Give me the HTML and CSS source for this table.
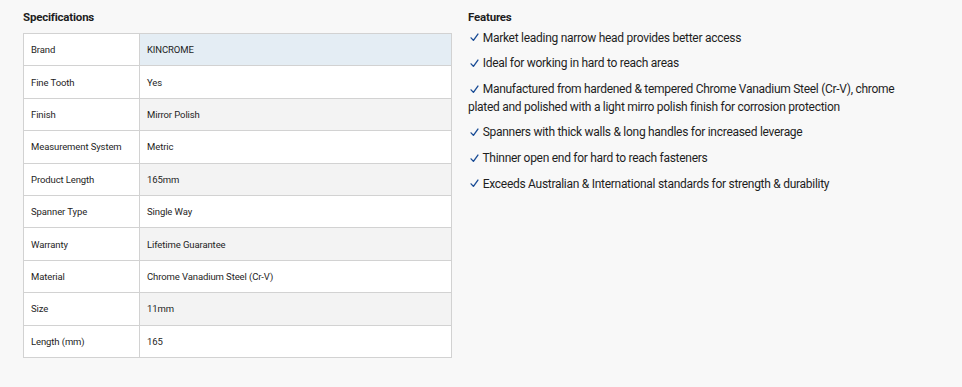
FILE: index.html
```html
<!DOCTYPE html>
<html>
<head>
<meta charset="utf-8">
<link rel="stylesheet" href="styles.css">
</head>
<body>
<div class="page">
  <section class="specs">
    <h2 class="title">Specifications</h2>
    <table class="spec-table">
      <tr class="hl"><td class="k">Brand</td><td class="v">KINCROME</td></tr>
      <tr><td class="k">Fine Tooth</td><td class="v">Yes</td></tr>
      <tr class="alt"><td class="k">Finish</td><td class="v">Mirror Polish</td></tr>
      <tr><td class="k">Measurement System</td><td class="v">Metric</td></tr>
      <tr class="alt"><td class="k">Product Length</td><td class="v">165mm</td></tr>
      <tr><td class="k">Spanner Type</td><td class="v">Single Way</td></tr>
      <tr class="alt"><td class="k">Warranty</td><td class="v">Lifetime Guarantee</td></tr>
      <tr><td class="k">Material</td><td class="v">Chrome Vanadium Steel (Cr-V)</td></tr>
      <tr class="alt"><td class="k">Size</td><td class="v">11mm</td></tr>
      <tr><td class="k">Length (mm)</td><td class="v">165</td></tr>
    </table>
  </section>
  <section class="features">
    <h2 class="ftitle">Features</h2>
    <ul class="flist">
      <li><svg class="chk" viewBox="0 0 10 10" width="9" height="9"><path d="M1.2 5.4 L3.8 8.2 L8.8 1.2" fill="none" stroke="#1b4d96" stroke-width="1.5" stroke-linecap="round" stroke-linejoin="round"/></svg> Market leading narrow head provides better access</li>
      <li><svg class="chk" viewBox="0 0 10 10" width="9" height="9"><path d="M1.2 5.4 L3.8 8.2 L8.8 1.2" fill="none" stroke="#1b4d96" stroke-width="1.5" stroke-linecap="round" stroke-linejoin="round"/></svg> Ideal for working in hard to reach areas</li>
      <li><svg class="chk" viewBox="0 0 10 10" width="9" height="9"><path d="M1.2 5.4 L3.8 8.2 L8.8 1.2" fill="none" stroke="#1b4d96" stroke-width="1.5" stroke-linecap="round" stroke-linejoin="round"/></svg> Manufactured from hardened &amp; tempered Chrome Vanadium Steel (Cr-V), chrome plated and polished with a light mirro polish finish for corrosion protection</li>
      <li><svg class="chk" viewBox="0 0 10 10" width="9" height="9"><path d="M1.2 5.4 L3.8 8.2 L8.8 1.2" fill="none" stroke="#1b4d96" stroke-width="1.5" stroke-linecap="round" stroke-linejoin="round"/></svg> Spanners with thick walls &amp; long handles for increased leverage</li>
      <li><svg class="chk" viewBox="0 0 10 10" width="9" height="9"><path d="M1.2 5.4 L3.8 8.2 L8.8 1.2" fill="none" stroke="#1b4d96" stroke-width="1.5" stroke-linecap="round" stroke-linejoin="round"/></svg> Thinner open end for hard to reach fasteners</li>
      <li><svg class="chk" viewBox="0 0 10 10" width="9" height="9"><path d="M1.2 5.4 L3.8 8.2 L8.8 1.2" fill="none" stroke="#1b4d96" stroke-width="1.5" stroke-linecap="round" stroke-linejoin="round"/></svg> Exceeds Australian &amp; International standards for strength &amp; durability</li>
    </ul>
  </section>
</div>
</body>
</html>
```
FILE: styles.css
```css
html, body {
  margin: 0;
  padding: 0;
  background: #f8f8f8;
}
body {
  font-family: Roboto, "Liberation Sans", sans-serif;
  color: #1e1e1e;
  width: 962px;
  height: 387px;
  overflow: hidden;
}
.page {
  display: flex;
  padding: 10px 0 0 23px;
}
.specs {
  width: 429px;
}
.title {
  margin: 0 0 8px 0;
  font-size: 11.5px;
  font-weight: 700;
  line-height: 15px;
  letter-spacing: -0.2px;
}
.spec-table {
  width: 429px;
  border-collapse: collapse;
  background: #fff;
  font-size: 9.5px;
  letter-spacing: -0.1px;
}
.spec-table td {
  border: 1px solid #d2d2d2;
  height: 31.4px;
  padding: 0 0 0 7px;
  vertical-align: middle;
}
.spec-table td.k {
  width: 108px;
}
.spec-table tr.alt td.v {
  background: #f3f3f3;
}
.spec-table tr.hl td.v {
  background: #e4edf4;
}
.features {
  margin-left: 16px;
  width: 430px;
}
.ftitle {
  margin: 0;
  font-size: 11.5px;
  font-weight: 700;
  line-height: 14px;
  letter-spacing: -0.2px;
}
.flist {
  list-style: none;
  margin: 5.5px 0 0 0;
  padding: 0;
  font-size: 12px;
  line-height: 17.5px;
  letter-spacing: -0.28px;
}
.flist li {
  margin-bottom: 8.3px;
}
.chk {
  display: inline-block;
  vertical-align: -0.5px;
  margin-left: 2px;
  margin-right: 1px;
}
```
